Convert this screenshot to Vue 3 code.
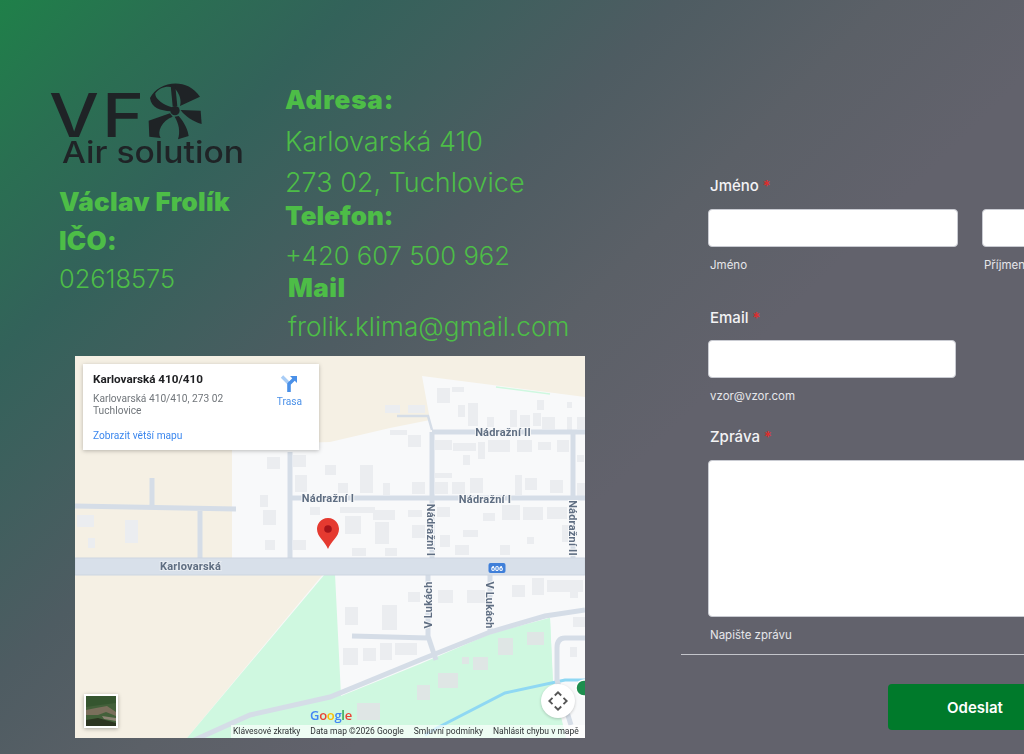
<script setup>
const buildings = [
  [437,388,13,15],[458,405,7,12],[468,403,10,23],[487,417,7,10],[510,410,7,17],[520,415,10,12],[533,413,8,13],[542,417,13,12],[567,417,5,13],[577,417,8,12],[537,400,7,10],[385,405,15,8],[408,405,17,8],[408,435,13,12],[390,430,17,5],[452,387,12,5],[567,402,5,6],
  [435,440,17,10],[453,443,23,8],[478,442,7,17],[488,440,22,12],[517,440,15,12],[538,442,13,8],[557,440,12,12],[463,455,7,10],[577,455,7,7],
  [412,482,13,12],[435,473,17,5],[435,482,13,12],[452,482,13,12],[470,478,13,15],[515,475,7,20],[525,478,12,12],[550,480,13,13],[577,483,8,14],[360,465,13,28],[338,483,10,10],[383,483,7,12],[330,465,6,10],
  [340,507,35,6],[345,516,16,18],[373,510,22,10],[375,522,14,22],[408,510,14,7],[412,525,13,13],[437,507,13,10],[463,530,15,7],[483,513,12,8],[502,505,18,15],[523,507,20,13],[547,507,20,12],[562,525,7,17],[527,537,7,7],[440,535,10,12],[352,548,14,8],[385,548,12,8],[455,545,14,10],[500,545,10,10],
  [267,457,13,12],[293,455,13,12],[325,465,10,10],[295,475,12,17],[260,495,8,12],[263,510,13,15],[125,520,13,23],[77,515,17,12],[88,538,7,10],[265,540,10,10],[293,540,13,10],[310,507,10,8],
  [408,592,12,10],[438,590,15,13],[467,590,18,13],[512,585,13,12],[532,578,12,17],[547,580,17,12],[563,580,20,12],[345,607,13,18],[382,605,15,25],[343,648,15,17],[363,648,13,13],[380,643,12,17],[395,643,22,12],[570,647,7,10],[573,617,12,10],[570,590,8,8]
]
const parkBuildings = [
  [357,703,23,17],[417,685,13,15],[438,673,20,15],[473,657,15,13],[498,638,15,17],[527,632,17,13],[462,657,7,7]
]
</script>

<template>
  <div class="page">
    <section class="left">
      <div class="top">
        <div class="brand">
          <svg class="logo" viewBox="50 80 196 86" width="196" height="86" role="img" aria-label="VF Air solution">
            <text class="logo-vf" x="49" y="137" textLength="50" lengthAdjust="spacingAndGlyphs">V</text>
            <text class="logo-vf" x="102" y="137" textLength="42" lengthAdjust="spacingAndGlyphs">F</text>
            <g transform="translate(30 70) scale(0.3333)" fill="#1f2326">
              <path d="M360 84 C384 36 468 18 510 80 L450 108 C456 88 446 66 430 52 C408 46 386 54 376 70 C374 86 400 104 426 112 L422 124 C392 122 364 114 360 84Z" />
              <path d="M422 46 L436 48 L442 108 L428 108Z" />
              <path d="M452 120 L512 122 L515 162 C488 154 464 138 452 120Z" />
              <path d="M446 138 C464 158 474 180 476 198 L444 208 C452 184 446 160 434 140Z" />
              <path d="M420 130 L356 152 L358 200 L392 204 C380 184 396 152 428 140Z" />
              <circle cx="435" cy="122" r="14" />
            </g>
            <text class="logo-air" x="62" y="162.5" textLength="182" lengthAdjust="spacingAndGlyphs">Air solution</text>
          </svg>
          <div class="person">
            <h2 class="head">Václav Frolík</h2>
            <h2 class="head">IČO:</h2>
            <p class="value">02618575</p>
          </div>
        </div>
        <div class="contact">
          <h2 class="head big">Adresa:</h2>
          <p class="value big">Karlovarská 410</p>
          <p class="value big">273 02, Tuchlovice</p>
          <h2 class="head phone">Telefon:</h2>
          <p class="value phone-value">+420 607 500 962</p>
          <h2 class="head mail">Mail</h2>
          <p class="value mail-value">frolik.klima@gmail.com</p>
        </div>
      </div>

      <div class="map">
        <div class="map-soft">
          <svg class="map-canvas" viewBox="75 356 510 382" width="510" height="382">
            <rect x="75" y="356" width="510" height="382" fill="#f5f0e4" />
            <polygon points="232,445 330,442 390,428 430,420 422,376 585,397 585,560 232,560" fill="#f8f9fa" />
            <polygon points="335,572 585,572 585,738 187,738 325,572" fill="#f8f9fa" />
            <polygon points="187,738 325,574 335,574 341,696 420,664 490,634 550,618 553,682 566,738" fill="#cff8e0" />
            <polygon points="498,632 330,715 330,738 566,738 553,690 550,618" fill="#cff8e0" />
            <path d="M496 387 L550 394" stroke="#cff8e0" stroke-width="1.5" fill="none" />
            <g fill="#ebedf0">
              <rect v-for="(b, i) in buildings" :key="i" :x="b[0]" :y="b[1]" :width="b[2]" :height="b[3]" />
            </g>
            <g fill="#dfe6e5">
              <rect v-for="(b, i) in parkBuildings" :key="i" :x="b[0]" :y="b[1]" :width="b[2]" :height="b[3]" />
            </g>
            <path class="stream" d="M425 735 L437 728 L505 693 L565 680 L585 680" />
            <g class="roads">
              <path d="M75 506 L236 509 M152 478 V506 M200 508 V558 M290 452 V558" />
              <path d="M290 498 H585 M432 432 H585 M432 432 V558 M573 432 V558" />
              <path d="M397 416 H428 L432 430" class="thin" />
              <path d="M428 575 V636 L436 660 M352 636 L428 638 M490 575 V632" />
              <path d="M190 742 L250 715 L330 697 L420 660 L490 632 L545 616 L585 610" />
              <path d="M585 638 H565 Q557 638 557 648 V680 L571 725" />
            </g>
            <rect x="75" y="558" width="510" height="17" fill="#d8e0ea" stroke="#cdd6e1" stroke-width="1" />
            <rect x="488.5" y="563" width="17" height="10" rx="2" fill="#3f7fd9" />
            <text class="shield" x="497" y="570.5" text-anchor="middle">606</text>
            <text class="street on-road" x="190.5" y="569.5" text-anchor="middle">Karlovarská</text>
            <text class="street" x="328" y="501.5" text-anchor="middle">Nádražní I</text>
            <text class="street" x="485" y="503" text-anchor="middle">Nádražní I</text>
            <text class="street" x="503" y="435.5" text-anchor="middle">Nádražní II</text>
            <text class="street" transform="translate(427 530) rotate(90)" text-anchor="middle">Nádražní I</text>
            <text class="street" transform="translate(569 528) rotate(90)" text-anchor="middle">Nádražní II</text>
            <text class="street" transform="translate(432 605) rotate(-90)" text-anchor="middle">V Lukách</text>
            <text class="street" transform="translate(486 605) rotate(90)" text-anchor="middle">V Lukách</text>
            <path d="M328 518 C320 518 317 525 317 529 C317 537 325 541 328 549 C331 541 339 537 339 529 C339 525 336 518 328 518Z" fill="#e53a30" />
            <circle cx="328" cy="529" r="3.8" fill="#a5141a" />
            <circle cx="584" cy="688" r="8" fill="#1e8e4e" stroke="#fff" stroke-width="1.5" />
          </svg>

          <div class="thumb">
            <svg viewBox="0 0 30 30" width="30" height="30">
              <rect width="30" height="30" fill="#43603a" />
              <path d="M0 0 H30 V7 L14 9 L0 11Z" fill="#35552f" />
              <path d="M0 14 L10 12 L21 10 L30 16 V20 L20 16 L12 19 L0 19Z" fill="#7b6f5c" />
              <path d="M16 20 L30 22 V25 L18 23Z" fill="#8d8474" />
              <path d="M0 24 L12 22 L30 27 V30 H0Z" fill="#2c3521" />
            </svg>
          </div>

          <div class="google"><span class="g-b">G</span><span class="g-r">o</span><span class="g-y">o</span><span class="g-b">g</span><span class="g-g">l</span><span class="g-r">e</span></div>

          <div class="recenter">
            <svg viewBox="0 0 24 24" width="22" height="22">
              <path d="M8.5 6 L12 2.5 L15.5 6 M8.5 18 L12 21.5 L15.5 18 M6 8.5 L2.5 12 L6 15.5 M18 8.5 L21.5 12 L18 15.5" fill="none" stroke="#555" stroke-width="2" />
            </svg>
          </div>

          <div class="attribution">
            <span>Klávesové zkratky</span>
            <span>Data map ©2026 Google</span>
            <span>Smluvní podmínky</span>
            <span>Nahlásit chybu v mapě</span>
          </div>

          <div class="card">
            <div class="card-text">
              <div class="card-title">Karlovarská 410/410</div>
              <div class="card-address">Karlovarská 410/410, 273 02<br />Tuchlovice</div>
              <a class="card-link">Zobrazit větší mapu</a>
            </div>
            <div class="route">
              <svg viewBox="0 0 18 18" width="18" height="18">
                <path d="M2 1.5 L9 8.5 V17" fill="none" stroke="#a9cdf6" stroke-width="3.4" />
                <path d="M9 17 V9 L15 3" fill="none" stroke="#4a90e8" stroke-width="3.4" />
                <path d="M10 1 H17 V8 Z" fill="#4a90e8" />
              </svg>
              <span>Trasa</span>
            </div>
          </div>
        </div>
      </div>
    </section>

    <form class="form" @submit.prevent>
      <div class="name-row">
        <div class="field">
          <label class="label" for="first">Jméno <span class="req">*</span></label>
          <input id="first" class="input first" type="text" />
          <small class="hint">Jméno</small>
        </div>
        <div class="field second">
          <input class="input last" type="text" aria-label="Příjmení" />
          <small class="hint">Příjmení</small>
        </div>
      </div>
      <div class="field email">
        <label class="label" for="email">Email <span class="req">*</span></label>
        <input id="email" class="input mail-input" type="text" />
        <small class="hint">vzor@vzor.com</small>
      </div>
      <div class="field message">
        <label class="label" for="msg">Zpráva <span class="req">*</span></label>
        <textarea id="msg" class="textarea"></textarea>
        <small class="hint">Napište zprávu</small>
      </div>
      <div class="actions">
        <button class="submit" type="submit">Odeslat</button>
      </div>
    </form>
  </div>
</template>

<style>
html, body { margin: 0; padding: 0; }
</style>

<style scoped>
.page {
  width: 1024px;
  height: 754px;
  overflow: hidden;
  display: grid;
  grid-template-columns: 680px 344px;
  background: linear-gradient(135deg, #1f8049 0%, #2a6f52 10%, #33625a 20%, #4e5c62 38%, #5b6067 50%, #62626c 62%);
  font-family: Inter, "Noto Sans", sans-serif;
}
.left { padding-top: 80px; min-width: 0; }
.top { display: flex; height: 276px; }
.brand { width: 235px; margin-left: 50px; flex: none; }
.logo { display: block; filter: blur(0.35px); overflow: visible; }
.logo-vf { font: 500 61px Inter, sans-serif; fill: #1f2326; }
.logo-air { font: 500 30px Inter, sans-serif; fill: #1f2326; }
.person { margin: 16px 0 0 9px; letter-spacing: 0; }
.person .head { letter-spacing: 0.3px; }
.person .value { margin-top: -1px; }
.head {
  margin: 0;
  font: 900 26px/39px "Inter", sans-serif;
  letter-spacing: 0.5px;
  color: #4dbd47;
  white-space: nowrap;
}
.value {
  margin: 0;
  font: 300 25.4px/39px "Inter", sans-serif;
  color: #4dbd47;
  white-space: nowrap;
}
.head.big { line-height: 40px; letter-spacing: 0.9px; }
.value.big { font-size: 27px; line-height: 41px; position: relative; top: 1px; }
.head.phone { line-height: 30px; margin-top: -1px; letter-spacing: 0; }
.phone-value { font-size: 25.7px; line-height: 49px; }
.mail { line-height: 30px; margin: -7px 0 0 3px; }
.mail-value { font-size: 26.2px; line-height: 48px; margin-left: 3px; }
.map {
  position: relative;
  width: 510px;
  height: 382px;
  margin-left: 75px;
  overflow: hidden;
  font-family: Roboto, sans-serif;
}
.map-soft { position: relative; width: 510px; height: 382px; filter: blur(0.45px); }
.map-canvas { display: block; }
.roads path {
  fill: none;
  stroke: #d5dde7;
  stroke-width: 5;
}
.roads path.thin { stroke-width: 2.5; }
.stream { fill: none; stroke: #8fd8f3; stroke-width: 3; }
.street {
  font: 700 11px Roboto, sans-serif;
  letter-spacing: 0.2px;
  fill: #5f6e82;
  stroke: #f8f9fa;
  stroke-width: 2px;
  paint-order: stroke;
}
.street.on-road { stroke: #e6ebf1; }
.shield { font: 700 7px Roboto, sans-serif; fill: #fff; }
.card {
  position: absolute;
  left: 8px;
  top: 8px;
  width: 236px;
  height: 86px;
  background: #fff;
  box-shadow: 0 1px 4px rgba(0, 0, 0, 0.25);
  display: flex;
  justify-content: space-between;
  box-sizing: border-box;
  padding: 8px 17px 0 10px;
}
.card-title { font: 700 11.7px/14px Roboto, sans-serif; color: #202124; }
.card-address { font: 400 10.2px/12px Roboto, sans-serif; color: #70757a; margin-top: 7px; }
.card-link { display: block; font: 400 10.2px/12px Roboto, sans-serif; color: #3b87ee; margin-top: 13px; }
.route { display: flex; flex-direction: column; align-items: center; gap: 3px; padding-top: 3px; color: #4a90e8; font: 400 10.2px/12px Roboto, sans-serif; }
.route svg { display: block; }
.thumb {
  position: absolute;
  left: 9px;
  top: 338px;
  width: 30px;
  height: 30px;
  border: 2px solid #fff;
  box-shadow: 0 1px 4px rgba(0, 0, 0, 0.3);
}
.thumb svg { display: block; }
.google {
  position: absolute;
  left: 235px;
  top: 351px;
  font: 600 13px/16px "Open Sans", Roboto, sans-serif;
  letter-spacing: -0.3px;
}
.g-b { color: #4285f4; }
.g-r { color: #ea4335; }
.g-y { color: #fbbc05; }
.g-g { color: #34a853; }
.recenter {
  position: absolute;
  left: 466px;
  top: 328px;
  width: 34px;
  height: 34px;
  border-radius: 50%;
  background: #fff;
  box-shadow: 0 1px 3px rgba(0, 0, 0, 0.2);
  display: flex;
  align-items: center;
  justify-content: center;
}
.attribution {
  position: absolute;
  right: 0;
  bottom: 0;
  width: 354px;
  height: 13px;
  box-sizing: border-box;
  padding-left: 2px;
  background: rgba(255, 255, 255, 0.65);
  display: flex;
  gap: 10px;
  font: 400 8.5px/13px Roboto, sans-serif;
  color: #2f3235;
  white-space: nowrap;
}
.form {
  width: 600px;
  padding-top: 176px;
  box-sizing: border-box;
}
.name-row { display: flex; gap: 24px; padding-left: 28px; }
.field { display: flex; flex-direction: column; }
.second { padding-top: 33px; }
.label {
  font: 500 15px/20px Inter, sans-serif;
  color: #f3f3f5;
  margin-left: 2px;
}
.req { color: #e02b2b; }
.input, .textarea {
  display: block;
  box-sizing: border-box;
  background: #fff;
  border: 1px solid #c9cbd2;
  border-radius: 4px;
  margin: 13px 0 0;
  padding: 0;
  height: 38px;
  outline: none;
}
.first { width: 250px; }
.last { width: 250px; margin-top: 0; }
.mail-input { width: 248px; margin-top: 12px; }
.hint {
  font: 400 11.5px/16px Inter, sans-serif;
  color: #e6e6ea;
  margin: 10px 0 0 2px;
}
.email { padding-left: 28px; margin-top: 35px; }
.message { padding-left: 28px; margin-top: 23px; }
.textarea { width: 560px; height: 157px; resize: none; }
.actions {
  margin: 11px 0 0 1px;
  border-top: 1px solid #c4c5cb;
  padding: 29px 0 0 207px;
}
.submit {
  display: block;
  width: 174px;
  height: 46px;
  background: #007a2b;
  border: 0;
  border-radius: 4px;
  color: #fff;
  font: 600 15px Inter, sans-serif;
}
</style>
